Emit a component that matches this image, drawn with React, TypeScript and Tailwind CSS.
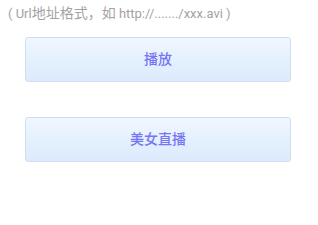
import React from 'react'

const FONT = 'Roboto, "Noto Sans CJK SC", sans-serif'

function BigButton({ label }: { label: string }) {
  return (
    <button
      className="w-[266px] h-[45px] rounded-[3px] border border-[#cfdff2] bg-gradient-to-b from-[#f0f7ff] to-[#dbeafd] text-[14px] font-medium text-[#7676f2] flex items-center justify-center"
      style={{ fontFamily: FONT }}>
      {label}
    </button>
  )
}

export default function App() {
  return (
    <div className="w-[318px] h-[225px] bg-white flex flex-col" style={{ fontFamily: FONT }}>
      <p className="pl-[8px] pt-[3px] h-[37px] text-[13px] leading-[20px] text-[#a3a3a3] whitespace-nowrap">
        ( Url<span className="text-[14px]">地址格式</span>
        <span className="text-[14px]">，如</span> http://......./xxx.avi )
      </p>
      <div className="flex flex-col gap-[35px] pl-[25px]">
        <BigButton label="播放" />
        <BigButton label="美女直播" />
      </div>
    </div>
  )
}
